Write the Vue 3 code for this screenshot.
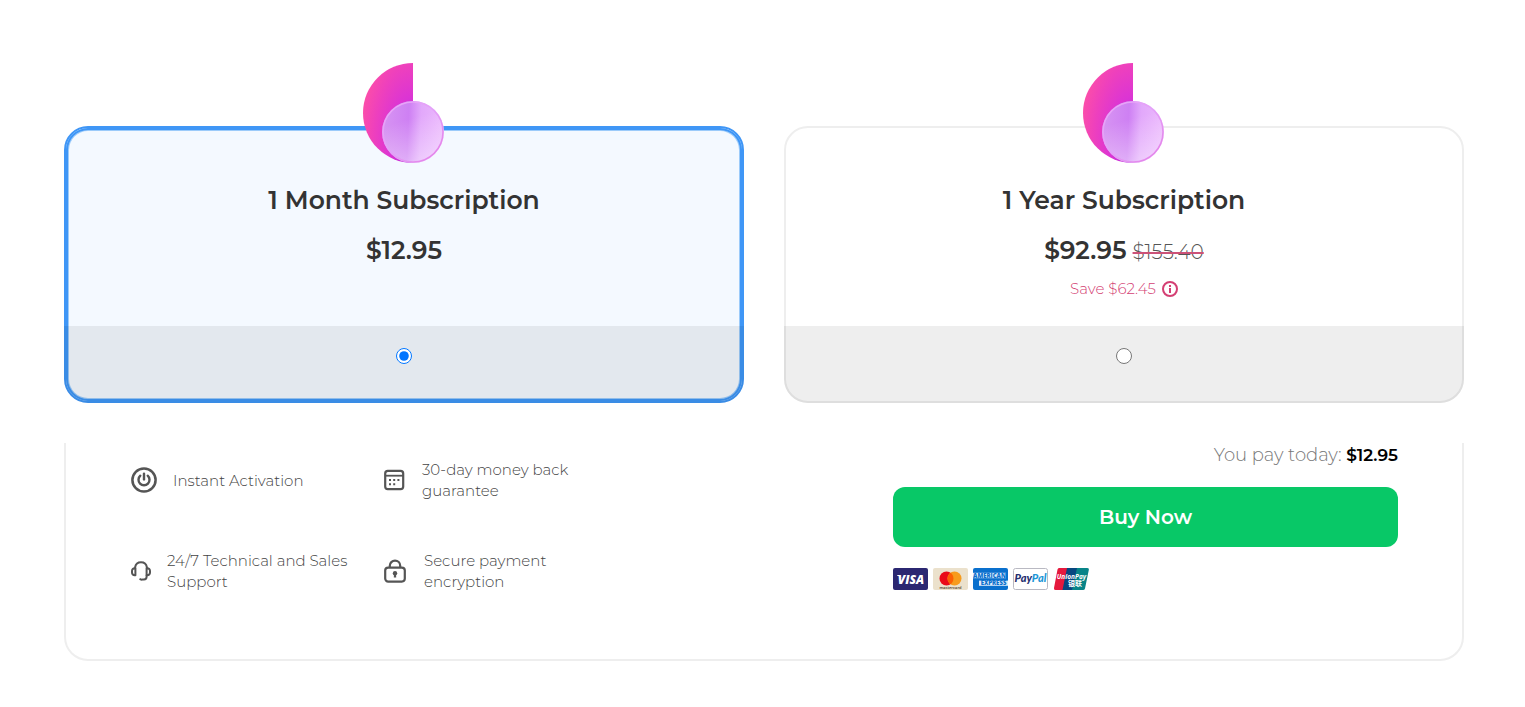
<script setup>
import { computed, ref } from 'vue'

const plans = [
  { id: 'month', title: '1 Month Subscription', price: '$12.95' },
  { id: 'year', title: '1 Year Subscription', price: '$92.95', oldPrice: '$155.40', save: 'Save $62.45' },
]
const selected = ref('month')
const total = computed(() => plans.find((p) => p.id === selected.value).price)
</script>

<template>
  <main class="page">
    <section class="plans">
      <label
        v-for="plan in plans"
        :key="plan.id"
        class="plan"
        :class="{ selected: selected === plan.id }"
        :for="plan.id"
      >
        <span class="plan-body">
          <svg class="plan-logo" viewBox="0 0 82 100" aria-hidden="true">
            <defs>
              <radialGradient :id="plan.id + '-half'" cx="1" cy="0.8" r="1.05">
                <stop offset="0" stop-color="#a92fe0" />
                <stop offset="0.45" stop-color="#dc35d3" />
                <stop offset="0.75" stop-color="#ee40bd" />
                <stop offset="1" stop-color="#fb4daa" />
              </radialGradient>
              <linearGradient :id="plan.id + '-disc'" x1="0" y1="0.48" x2="1" y2="0.52">
                <stop offset="0" stop-color="#d795f2" />
                <stop offset="0.42" stop-color="#ce80f3" />
                <stop offset="0.62" stop-color="#e2a8fb" />
                <stop offset="1" stop-color="#ecb9fd" />
              </linearGradient>
              <linearGradient :id="plan.id + '-shine'" x1="0.3" y1="0" x2="0.6" y2="1">
                <stop offset="0.3" stop-color="#fff" stop-opacity="0" />
                <stop offset="1" stop-color="#fff" stop-opacity="0.4" />
              </linearGradient>
              <linearGradient :id="plan.id + '-rim'" x1="0" y1="0" x2="1" y2="1">
                <stop offset="0" stop-color="#eba5f8" />
                <stop offset="0.5" stop-color="#e3a0f8" />
                <stop offset="1" stop-color="#e57be5" />
              </linearGradient>
            </defs>
            <path d="M50 0A50 50 0 0 0 50 100Z" :fill="`url(#${plan.id}-half)`" />
            <circle cx="50" cy="69" r="31" :fill="`url(#${plan.id}-disc)`" />
            <circle cx="50" cy="69" r="31" :fill="`url(#${plan.id}-shine)`" />
            <circle cx="50" cy="69" r="30" fill="none" :stroke="`url(#${plan.id}-rim)`" stroke-width="1.6" />
          </svg>
          <span class="plan-title">{{ plan.title }}</span>
          <span class="plan-price">
            <strong>{{ plan.price }}</strong>
            <del v-if="plan.oldPrice">{{ plan.oldPrice }}</del>
          </span>
          <span v-if="plan.save" class="plan-save">
            {{ plan.save }}
            <svg width="16" height="16" viewBox="0 0 16 16" aria-hidden="true">
              <circle cx="8" cy="8" r="7" fill="none" stroke="currentColor" stroke-width="2" />
              <path d="M8 7V12M8 4V6" stroke="currentColor" stroke-width="2" />
            </svg>
          </span>
        </span>
        <span class="plan-foot">
          <input :id="plan.id" v-model="selected" type="radio" name="plan" :value="plan.id" />
        </span>
      </label>
    </section>

    <section class="checkout">
      <ul class="features">
        <li>
          <svg width="26" height="26" viewBox="0 0 26 26" aria-hidden="true">
            <g fill="none" stroke="#555" stroke-linecap="round">
              <circle cx="13" cy="13" r="11.6" stroke-width="2.5" />
              <path d="M13 6.8V12.4" stroke-width="2.4" />
              <path d="M9.3 8.7A5.5 5.5 0 1 0 16.7 8.7" stroke-width="2.4" />
            </g>
          </svg>
          <span>Instant Activation</span>
        </li>
        <li>
          <svg width="22" height="22" viewBox="0 0 22 22" aria-hidden="true">
            <rect x="1.2" y="1.9" width="18" height="18.2" rx="2.6" fill="none" stroke="#555" stroke-width="2.2" />
            <path d="M1.5 6.7H19" stroke="#555" stroke-width="1.8" />
            <path
              d="M5 10h2v2H5zM9.2 10h2v2h-2zM13.4 10h2v2h-2zM5 14.2h2v2H5zM9.2 14.2h2v2h-2z"
              fill="#555"
            />
          </svg>
          <span>30-day money back guarantee</span>
        </li>
        <li>
          <svg width="20" height="22" viewBox="0 0 20 22" aria-hidden="true">
            <g fill="none" stroke="#555" stroke-width="2" stroke-linecap="round" stroke-linejoin="round">
              <path d="M4.1 8.2V7.2A6 6 0 0 1 15.9 7.2V8.2" />
              <path d="M4.4 8.3V15.2H3.6A2.6 2.6 0 0 1 1 12.6V10.9A2.6 2.6 0 0 1 3.6 8.3Z" />
              <path d="M15.6 8.3V15.2H16.4A2.6 2.6 0 0 0 19 12.6V10.9A2.6 2.6 0 0 0 16.4 8.3Z" />
              <path d="M15.6 15.4V16.8A2.6 2.6 0 0 1 13 19.4H11.6Q10.8 20.2 9.2 19.2" />
            </g>
          </svg>
          <span>24/7 Technical and Sales Support</span>
        </li>
        <li>
          <svg width="24" height="26" viewBox="0 0 24 26" aria-hidden="true">
            <g fill="none" stroke="#555" stroke-width="2.2">
              <rect x="1.2" y="9.6" width="19.6" height="14" rx="3" />
              <path d="M5.8 9.4V7.8A5.2 5.2 0 0 1 16.2 7.8V9.4" />
            </g>
            <circle cx="11" cy="15.2" r="2.2" fill="#555" />
            <path d="M10 15H12L12.2 19.6H9.8Z" fill="#555" />
          </svg>
          <span>Secure payment encryption</span>
        </li>
      </ul>

      <div class="pay">
        <p class="total">You pay today: <strong>{{ total }}</strong></p>
        <button type="button" class="buy">Buy Now</button>
        <div class="cards">
          <svg viewBox="0 0 35 22" role="img" aria-label="Visa">
            <rect width="35" height="22" rx="2" fill="#2b2771" />
            <text x="18" y="15.6" class="brand visa" font-size="12">VISA</text>
            <path d="M4 7H7L8.6 10Q7 8 4 7.5Z" fill="#fff" />
          </svg>
          <svg viewBox="0 0 35 22" role="img" aria-label="Mastercard">
            <rect width="35" height="22" rx="2" fill="#ebe1cc" />
            <circle cx="13.5" cy="10.5" r="7" fill="#e90a18" />
            <circle cx="21.5" cy="10.5" r="7" fill="#f79b1c" />
            <path d="M17.5 4.8A7 7 0 0 1 17.5 16.2A7 7 0 0 1 17.5 4.8Z" fill="#fb5f04" />
            <text x="17.5" y="20.6" class="brand mc" font-size="4">mastercard</text>
          </svg>
          <svg viewBox="0 0 35 22" role="img" aria-label="American Express">
            <rect width="35" height="22" rx="2" fill="#0a70cd" />
            <rect x="0" y="4.8" width="33" height="5.4" fill="#dcecfa" />
            <rect x="6" y="12.6" width="29" height="5.2" fill="#dcecfa" />
            <text x="16.5" y="9.8" class="brand amex" font-size="6">AMERICAN</text>
            <text x="20.5" y="17.4" class="brand amex" font-size="6">EXPRESS</text>
          </svg>
          <svg viewBox="0 0 35 22" role="img" aria-label="PayPal">
            <rect x="0.5" y="0.5" width="34" height="21" rx="2" fill="#fff" stroke="#b9b9c2" />
            <text x="17.5" y="14.2" class="brand paypal" font-size="11"><tspan fill="#26306f">Pay</tspan><tspan fill="#1d97d7">Pal</tspan></text>
          </svg>
          <svg class="union" viewBox="0 0 36 22" role="img" aria-label="UnionPay">
            <path d="M6 0H16L11 22H2.5Q0.5 22 1 20L4.5 1.5Q4.8 0 6 0Z" fill="#e5193d" />
            <path d="M14 0H25L20 22H9.5Z" fill="#07477f" />
            <path d="M24 0H34Q36.3 0 35.8 2L32 20.5Q31.6 22 30 22H19Z" fill="#088488" />
            <text x="18.5" y="10.8" class="brand up" font-size="6.5">UnionPay</text>
            <text x="22" y="18" class="brand cn" font-size="7">银联</text>
          </svg>
        </div>
      </div>
    </section>
  </main>
</template>

<style>
body {
  margin: 0;
  background: #fff;
}
</style>

<style scoped>
.page {
  box-sizing: border-box;
  padding: 126px 61px 46px 64px;
  font-family: Montserrat, Inter, "Liberation Sans", sans-serif;
  color: #333;
}
.plans {
  display: grid;
  grid-template-columns: 1fr 1fr;
  gap: 40px;
}
.plan {
  display: flex;
  flex-direction: column;
  border: 2px solid #eee;
  border-radius: 24px;
  cursor: pointer;
}
.plan.selected {
  border-color: #3f96f6;
  background: #f4f9ff;
  box-shadow: inset 0 0 0 2px #3f96f6, inset 0 0 0 3px #9ccbfa;
}
.plan-body {
  display: flex;
  flex-direction: column;
  align-items: center;
  min-height: 198px;
}
.plan-logo {
  width: 82px;
  height: 100px;
  margin-top: -65px;
}
.plan-title {
  margin-top: 21px;
  font-size: 25px;
  font-weight: 600;
  line-height: 32px;
}
.plan-price {
  display: flex;
  align-items: baseline;
  gap: 6px;
  margin-top: 18px;
  font-size: 25px;
  line-height: 32px;
}
.plan-price strong {
  font-weight: 600;
}
.plan-price del {
  font-size: 20px;
  font-weight: 300;
  line-height: 24px;
  color: #555;
  text-decoration: line-through 2px #cc5278;
}
.plan-save {
  display: flex;
  align-items: center;
  gap: 6px;
  margin-top: 11px;
  font-size: 15px;
  font-weight: 300;
  line-height: 24px;
  color: #d43f73;
}
.plan-foot {
  display: flex;
  justify-content: center;
  align-items: flex-start;
  box-sizing: border-box;
  height: 77px;
  margin: 0 -2px -2px;
  padding-top: 22px;
  border-radius: 0 0 24px 24px;
  background: rgba(0, 0, 0, 0.067);
}
.plan-foot input {
  width: 16px;
  height: 16px;
  margin: 0;
}
.checkout {
  display: grid;
  grid-template-columns: 762fr 505fr;
  margin-top: 40px;
  padding: 0 64px 67px 65px;
  border: 2px solid #eee;
  border-top: 0;
  border-radius: 0 0 24px 24px;
}
.features {
  display: grid;
  grid-template-columns: 253px 230px;
  grid-auto-rows: 42px;
  gap: 49px 0;
  margin: 0;
  padding: 16px 0 0;
  list-style: none;
  font-size: 15px;
  font-weight: 300;
  line-height: 21px;
  color: #444;
}
.features li {
  display: flex;
  align-items: center;
  gap: 16px;
  padding-right: 24px;
}
.features svg {
  flex: none;
}
.total {
  margin: 0;
  text-align: right;
  font-size: 18px;
  font-weight: 300;
  line-height: 24px;
  color: #777;
}
.total strong {
  font-size: 17px;
  font-weight: 600;
  color: #000;
}
.buy {
  display: block;
  width: 100%;
  height: 60px;
  margin-top: 20px;
  border: 0;
  border-radius: 12px;
  background: #08c867;
  color: #fff;
  font-family: inherit;
  font-size: 20px;
  font-weight: 600;
  cursor: pointer;
}
.cards {
  display: flex;
  gap: 5px;
  margin-top: 21px;
}
.cards svg {
  width: 35px;
  height: 22px;
}
.cards .union {
  width: 36px;
}
.brand {
  text-anchor: middle;
  font-family: "Open Sans", sans-serif;
  font-weight: 800;
}
.visa {
  fill: #fff;
  font-style: italic;
}
.mc {
  fill: #4a3524;
  font-weight: 600;
}
.amex {
  fill: #0a70cd;
}
.paypal {
  font-family: Lato, sans-serif;
  font-weight: 900;
  font-style: italic;
}
.up {
  fill: #fff;
  font-weight: 700;
  font-style: italic;
}
.cn {
  fill: #fff;
  font-family: "Noto Sans CJK SC", sans-serif;
  font-weight: 700;
}
</style>
